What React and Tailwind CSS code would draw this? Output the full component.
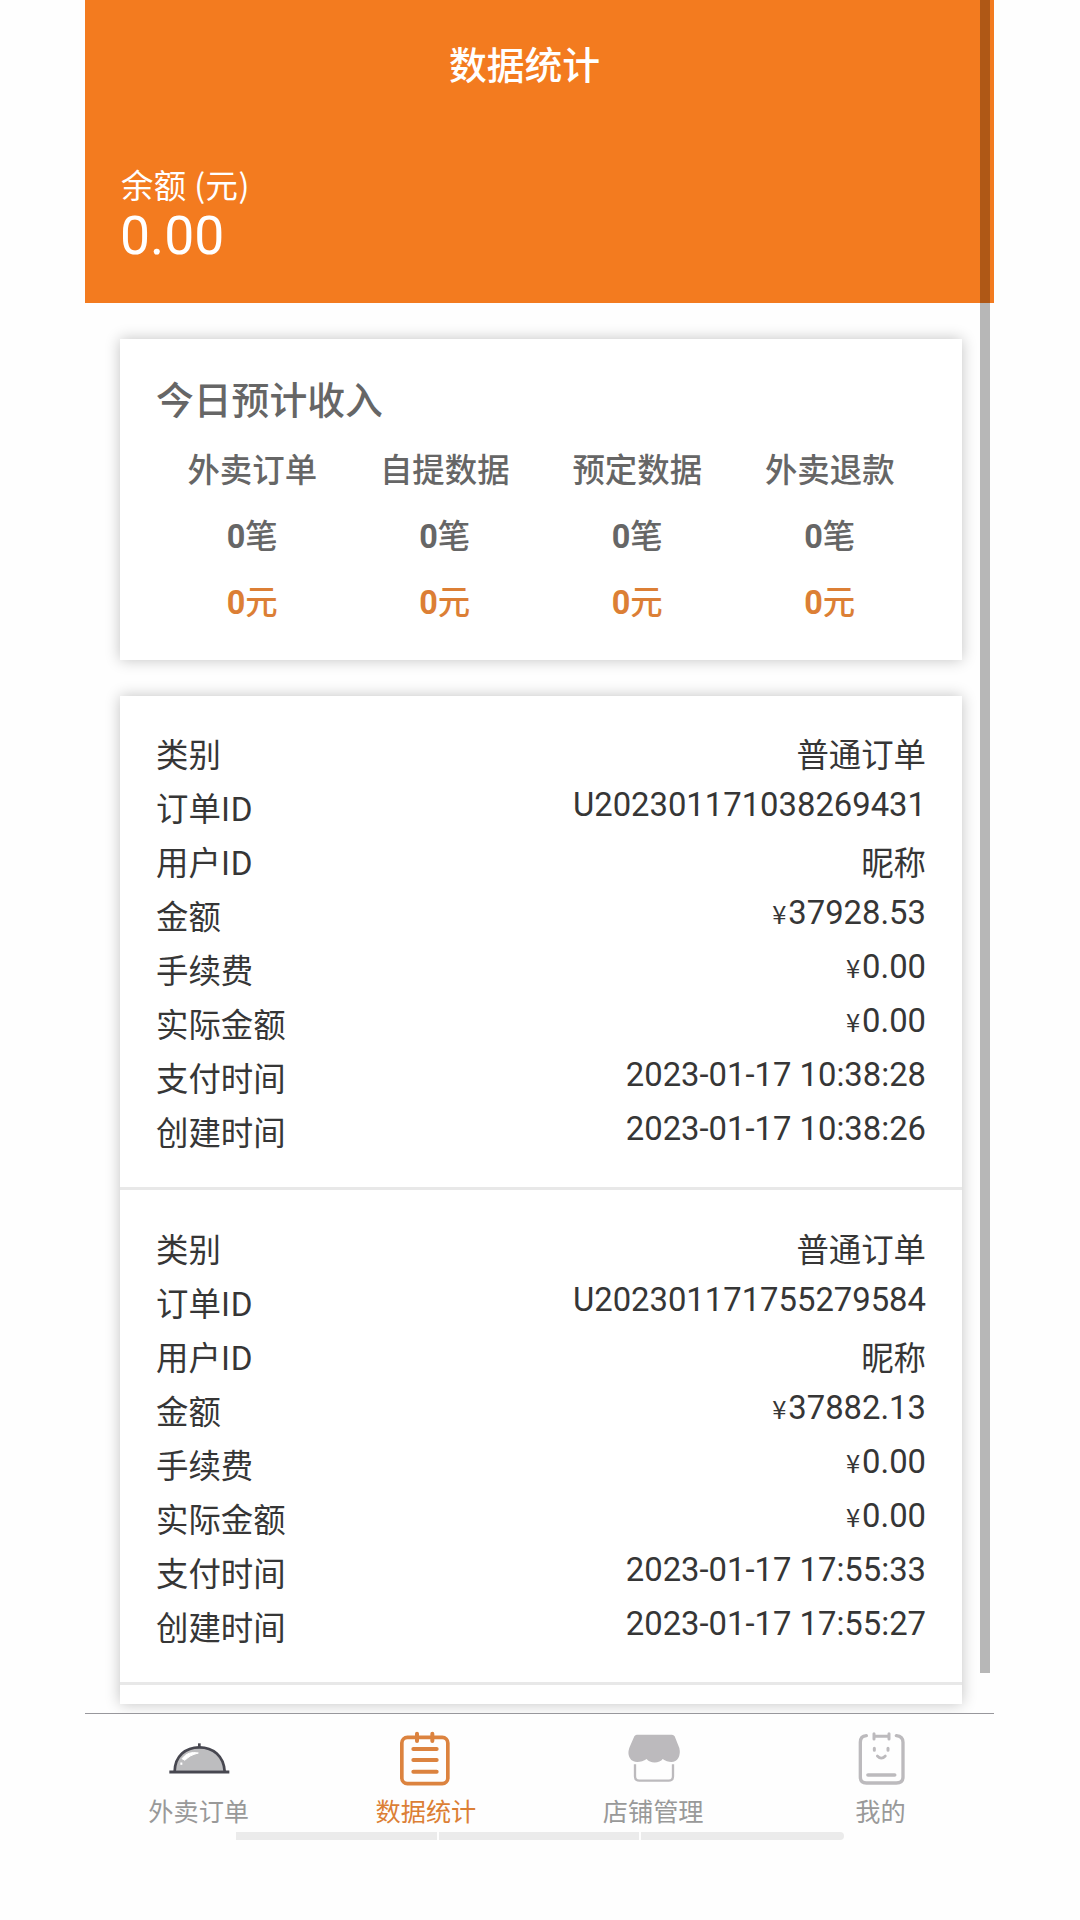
import React from "react";

const stats = [
  { label: "外卖订单", count: "笔", sum: "元" },
  { label: "自提数据", count: "笔", sum: "元" },
  { label: "预定数据", count: "笔", sum: "元" },
  { label: "外卖退款", count: "笔", sum: "元" },
];

const orders = [
  {
    id: "U202301171038269431",
    amount: "37928.53",
    paid: "2023-01-17 10:38:28",
    created: "2023-01-17 10:38:26",
  },
  {
    id: "U202301171755279584",
    amount: "37882.13",
    paid: "2023-01-17 17:55:33",
    created: "2023-01-17 17:55:27",
  },
];

const cjk = "font-['Noto_Sans_CJK_SC',sans-serif]";

function Row({ label, text, number, price }) {
  return (
    <div className="flex h-[54px] items-start justify-between whitespace-nowrap text-[#363636]">
      <span className={`${cjk} text-[32.4px] leading-[52px]`}>{label}</span>
      {text && <span className={`${cjk} text-[32.4px] leading-[52px]`}>{text}</span>}
      {number && <span className="text-[32.8px] leading-[49px]">{number}</span>}
      {price && (
        <span className="text-[32.8px] leading-[49px]">
          <span className={`${cjk} mr-[2px] text-[25.5px] leading-none`}>¥</span>
          {price}
        </span>
      )}
    </div>
  );
}

function Order({ order }) {
  return (
    <div className="h-[494.5px] border-b-[3px] border-[#e8e8e8] px-9 pt-[31.5px]">
      <Row label="类别" text="普通订单" />
      <Row label="订单ID" number={order.id} />
      <Row label="用户ID" text="昵称" />
      <Row label="金额" price={order.amount} />
      <Row label="手续费" price="0.00" />
      <Row label="实际金额" price="0.00" />
      <Row label="支付时间" number={order.paid} />
      <Row label="创建时间" number={order.created} />
    </div>
  );
}

function DishIcon() {
  return (
    <svg viewBox="0 0 180 180" className="size-[60px] overflow-visible" fill="none">
      <path d="M17 128C18 84 50 56 91 56S164 84 167 128Z" fill="#bdbdbf" />
      <path d="M17 130C18 84 50 58 91 58S164 84 167 130" stroke="#474750" strokeWidth="8" />
      <path d="M91 57V46" stroke="#474750" strokeWidth="8" />
      <path d="M1 132H181" stroke="#474750" strokeWidth="9" />
      <path d="M39 92Q57 68 88 75Q60 82 48 97Z" fill="#fff" stroke="#fff" strokeWidth="3" />
      <path d="M34 107h6" stroke="#fff" strokeWidth="7" />
    </svg>
  );
}

function NotesIcon() {
  return (
    <svg viewBox="0 0 180 180" className="size-[60px]" fill="none" stroke="#dc833f" strokeWidth="11" strokeLinecap="round">
      <rect x="17.500" y="28" width="138" height="139" rx="17" />
      <path d="M63 17V39M109 17V39M52 63H122M52 96H122M52 131H122" strokeWidth="12" />
    </svg>
  );
}

function ShopIcon() {
  return (
    <svg viewBox="0 0 180 180" className="ml-px size-[60px]" fill="none">
      <path
        d="M38 20H144Q149 20 152 25L166 60Q170 77 163 90C154 107 132 104 116 93C108 107 76 107 68 93C52 104 27 107 18 91C11 78 13 68 17 57L31 25Q34 20 38 20Z"
        fill="#bcbabd"
      />
      <path d="M33 109V145Q33 158 46 158H134Q147 158 147 145V109" stroke="#bcbabd" strokeWidth="7" />
    </svg>
  );
}

function MeIcon() {
  return (
    <svg viewBox="0 0 180 180" className="ml-px size-[60px]" fill="none" stroke="#bcbabd" strokeWidth="10" strokeLinecap="round">
      <path d="M46 23Q28 24 28 43V147Q28 165 46 165H136Q156 165 156 147V43Q156 25 136 23" />
      <path d="M69 17V33M114 17V33M69 25H114" strokeWidth="9" />
      <path d="M70 61V67M111 61V67" strokeWidth="9" />
      <path d="M79 84Q91 97 103 84" strokeWidth="8" />
      <path d="M51 141H131" strokeWidth="11" />
    </svg>
  );
}

const tabs = [
  { label: "外卖订单", Icon: DishIcon },
  { label: "数据统计", Icon: NotesIcon, active: true },
  { label: "店铺管理", Icon: ShopIcon },
  { label: "我的", Icon: MeIcon },
];

export default function App() {
  return (
    <div className="h-[1920px] w-[1080px] overflow-hidden bg-[#fefefe] font-['Roboto','Noto_Sans_CJK_SC',sans-serif]">
      <div className="relative ml-[85px] w-[909px]">
        <div className="h-[1713px] overflow-hidden">
          <header className={`${cjk} flex h-[303px] flex-col bg-[#f37b1f] px-9 text-white`}>
            <h1 className="mt-[36px] mr-[30px] text-center text-[37.8px] leading-[54px] font-medium">数据统计</h1>
            <div className="mt-[69px] text-[32.4px] leading-[50px] tracking-[0.4px]">余额 (元)</div>
            <div className="-ml-px font-[Roboto,sans-serif] text-[53.5px] leading-[54px]">0.00</div>
          </header>

          <section className="mx-[35px] mt-[35.5px] h-[321px] w-[842px] bg-white px-9 text-[#666] shadow-[0_0_14px_rgba(0,0,0,0.24)]">
            <h2 className={`${cjk} pt-[31px] text-[37.8px] leading-[56px] font-medium`}>今日预计收入</h2>
            <div className="mt-[8px] grid grid-cols-4 text-center text-[32.4px] leading-[67px] font-medium whitespace-nowrap">
              {stats.map((s) => (
                <div key={s.label}>
                  <div className={cjk}>{s.label}</div>
                  <div className="mt-[3px]">
                    <span className="font-bold">0</span>
                    {s.count}
                  </div>
                  <div className="-mt-px text-[#dc7f35]">
                    <span className="font-bold">0</span>
                    {s.sum}
                  </div>
                </div>
              ))}
            </div>
          </section>

          <section className="mx-[35px] mt-[36px] h-[1008.500px] w-[842px] bg-white shadow-[0_0_14px_rgba(0,0,0,0.24)]">
            {orders.map((o) => (
              <Order key={o.id} order={o} />
            ))}
          </section>
        </div>

        <nav className="grid h-[119px] grid-cols-4 border-t border-[#98979c]">
          {tabs.map(({ label, Icon, active }) => (
            <div key={label} className="flex flex-col items-center pt-[14px]">
              <Icon />
              <span
                className={`${cjk} mt-[4px] text-[25.2px] leading-9 whitespace-nowrap ${active ? "text-[#dc7f35]" : "text-[#999]"}`}
              >
                {label}
              </span>
            </div>
          ))}
        </nav>

        <div className="ml-[151px] flex h-2 w-[608px] gap-[2px]">
          <div className="w-[201px] bg-[#ebebeb]" />
          <div className="w-[200px] bg-[#ebebeb]" />
          <div className="flex-1 rounded-r-full bg-[#ebebeb]" />
        </div>

        {/* Scroll indicator over the page content */}
        <div className="absolute top-0 right-[4px] h-[1673px] w-[10px] bg-black/28" />
      </div>
    </div>
  );
}
